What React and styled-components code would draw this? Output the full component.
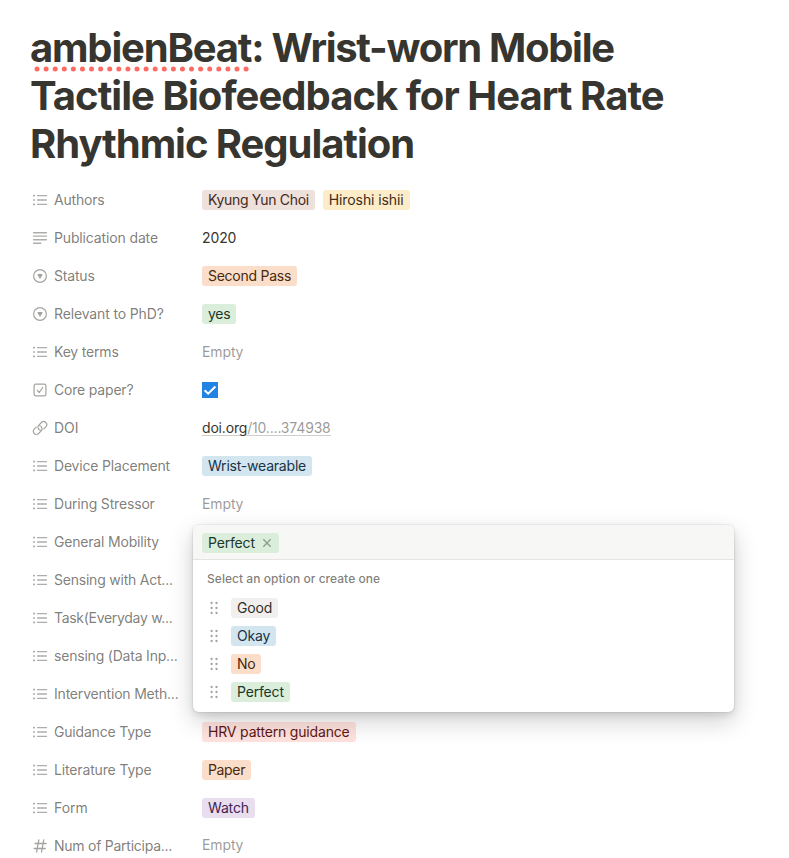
import React from "react";
import styled, { createGlobalStyle } from "styled-components";

const Global = createGlobalStyle`
  * { box-sizing: border-box; }
  html, body { margin: 0; padding: 0; background: #fff; }
  body { height: 858px; overflow: hidden; }
`;

const Page = styled.main`
  width: 789px;
  height: 858px;
  overflow: hidden;
  padding: 24px 24px 0 30px;
  background: #fff;
  color: #37352f;
  font-family: Inter, "Liberation Sans", sans-serif;
  font-size: 14px;
  line-height: 20px;
`;

const Title = styled.h1`
  margin: 0 0 15px;
  font-size: 40px;
  line-height: 48px;
  font-weight: 700;
`;

const TitleLine = styled.span`
  display: block;
  white-space: nowrap;
  letter-spacing: ${(p) => p.$track || 0}px;
`;

const Misspelled = styled.span`
  position: relative;
  letter-spacing: -1.18px;
`;

const Squiggle = styled.svg`
  position: absolute;
  left: 0;
  top: 42px;
`;

const Properties = styled.section`
  display: flex;
  flex-direction: column;
  gap: 4px;
`;

const PropertyRow = styled.div`
  display: flex;
  align-items: center;
  height: 34px;
  position: relative;
`;

const PropertyName = styled.div`
  display: flex;
  align-items: center;
  flex: none;
  width: 172px;
  padding-left: 2px;
  color: rgba(55, 53, 47, 0.65);
  white-space: nowrap;
  letter-spacing: ${(p) => p.$track ?? -0.19}px;

  svg {
    flex: none;
    margin-right: 6px;
  }
`;

const PropertyValue = styled.div`
  display: flex;
  align-items: center;
  gap: 8px;
  margin-top: ${(p) => p.$shift || 0}px;
`;

const Plain = styled.span`
  white-space: nowrap;
  color: ${(p) => (p.$muted ? "rgba(55, 53, 47, 0.5)" : "#37352f")};
  letter-spacing: -0.12px;
`;

const DoiLink = styled.span`
  height: 16px;
  line-height: 16px;
  border-bottom: 1px solid #cfcecc;
  letter-spacing: -0.18px;

  span { color: rgba(55, 53, 47, 0.5); }
`;

const palette = {
  gray: ["#f1f0ef", "#32302c"],
  brown: ["#eee0da", "#442a1e"],
  yellow: ["#fdecc8", "#402c1b"],
  orange: ["#fadec9", "#49290e"],
  green: ["#dbeddb", "#1c3829"],
  blue: ["#d3e5ef", "#183347"],
  red: ["#ffe2dd", "#5d1715"],
  purple: ["#e8deee", "#412454"],
};

const Tag = styled.span`
  display: inline-flex;
  align-items: center;
  height: 20px;
  padding: 0 6px;
  border-radius: 3px;
  white-space: nowrap;
  letter-spacing: ${(p) => p.$track ?? -0.17}px;
  background: ${(p) => palette[p.$color][0]};
  color: ${(p) => palette[p.$color][1]};

  svg { margin: 0 1px 0 7px; }
`;

const Checkbox = styled.span`
  display: flex;
  width: 16px;
  height: 16px;
  background: #2383e2;
`;

const Popup = styled.div`
  position: absolute;
  z-index: 2;
  left: 163px;
  top: 0;
  width: 541px;
  height: 187px;
  border-radius: 6px;
  overflow: hidden;
  background: #fff;
  box-shadow: 0 0 0 1px rgba(15, 15, 15, 0.05), 0 3px 6px rgba(15, 15, 15, 0.1),
    0 9px 24px rgba(15, 15, 15, 0.2);
`;

const PopupHeader = styled.div`
  display: flex;
  align-items: center;
  height: 35px;
  padding: 1px 9px 0;
  background: #f7f7f5;
  border-bottom: 1px solid #e4e4e2;
`;

const PopupHint = styled.div`
  padding: 9px 14px 0;
  font-size: 12px;
  font-weight: 500;
  color: rgba(55, 53, 47, 0.65);
  letter-spacing: 0.04px;
`;

const OptionList = styled.div`
  display: flex;
  flex-direction: column;
  padding-top: 5px;
`;

const Option = styled.div`
  display: flex;
  align-items: center;
  height: 28px;
  padding-left: 17px;

  svg { margin-right: 13px; }
`;

const stroke = "#a4a3a0";
const softStroke = "#aeadaa";

const ListIcon = () => (
  <svg width="16" height="16" viewBox="0 0 16 16" fill={softStroke}>
    {[2.9, 7.3, 11.7].map((y) => (
      <g key={y}>
        <rect x="1" y={y - 0.1} width="2" height="1.6" rx="0.3" />
        <rect x="5" y={y} width="10" height="1.4" rx="0.4" />
      </g>
    ))}
  </svg>
);

const TextIcon = () => (
  <svg width="16" height="16" viewBox="0 0 16 16" fill={softStroke}>
    <rect x="1" y="2" width="14" height="1.4" rx="0.4" />
    <rect x="1" y="5.4" width="14" height="1.4" rx="0.4" />
    <rect x="1" y="9" width="14" height="1.4" rx="0.4" />
    <rect x="1" y="12.5" width="8.4" height="1.4" rx="0.4" />
  </svg>
);

const SelectIcon = () => (
  <svg width="16" height="16" viewBox="0 0 16 16">
    <circle cx="8" cy="8" r="6.4" fill="none" stroke={stroke} strokeWidth="1.2" />
    <path d="M5.9 6.1h4.2c.4 0 .6.4.4.7L8.4 10.5c-.2.3-.6.3-.8 0L5.5 6.8c-.2-.3 0-.7.4-.7z" fill={stroke} />
  </svg>
);

const CheckIcon = () => (
  <svg width="16" height="16" viewBox="0 0 16 16" fill="none" stroke={stroke} strokeWidth="1.2">
    <rect x="2.1" y="2.1" width="11.8" height="11.8" rx="1.6" />
    <path d="M5.3 8.3l1.9 2.2 3.5-5" strokeLinecap="round" strokeLinejoin="round" />
  </svg>
);

const LinkIcon = () => (
  <svg width="16" height="16" viewBox="0 0 24 24" fill="none" stroke={stroke} strokeWidth="1.8" strokeLinecap="round" strokeLinejoin="round">
    <path d="M12.6 15.4a4.6 4.6 0 0 1-2.4-7.7l4-4a4.55 4.55 0 0 1 6.5 6.5l-3.1 3.1" />
    <path d="M11.4 8.6a4.6 4.6 0 0 1 2.4 7.7l-4 4a4.55 4.55 0 0 1-6.5-6.5l3.1-3.1" />
  </svg>
);

const HashIcon = () => (
  <svg width="16" height="16" viewBox="0 0 16 16" fill="none" stroke={stroke} strokeWidth="1.3" strokeLinecap="round">
    <path d="M6.8 2L4.6 14M11.7 2L9.5 14M3.1 5.5h11M2.2 10.5h11" />
  </svg>
);

const CloseIcon = () => (
  <svg width="10" height="10" viewBox="0 0 10 10" fill="none" stroke="#8ba08f" strokeWidth="1.4">
    <path d="M1.3 1.3l7.4 7.4M8.7 1.3L1.3 8.7" />
  </svg>
);

const GripIcon = () => (
  <svg width="8" height="14" viewBox="0 0 8 14" fill="#a3a29f">
    {[2, 7, 12].map((y) => (
      <React.Fragment key={y}>
        <circle cx="1.6" cy={y} r="1.15" />
        <circle cx="6.5" cy={y} r="1.15" />
      </React.Fragment>
    ))}
  </svg>
);

const options = [
  { text: "Good", color: "gray" },
  { text: "Okay", color: "blue", track: -0.22 },
  { text: "No", color: "orange", track: -0.3 },
  { text: "Perfect", color: "green" },
];

const OptionPicker = () => (
  <Popup>
    <PopupHeader>
      <Tag $color="green">
        Perfect
        <CloseIcon />
      </Tag>
    </PopupHeader>
    <PopupHint>Select an option or create one</PopupHint>
    <OptionList>
      {options.map((o) => (
        <Option key={o.text}>
          <GripIcon />
          <Tag $color={o.color} $track={o.track}>{o.text}</Tag>
        </Option>
      ))}
    </OptionList>
  </Popup>
);

const rows = [
  {
    name: "Authors",
    tags: [
      { text: "Kyung Yun Choi", color: "brown", track: -0.34 },
      { text: "Hiroshi ishii", color: "yellow", track: -0.1 },
    ],
  },
  { name: "Publication date", icon: TextIcon, plain: "2020", track: -0.14 },
  { name: "Status", icon: SelectIcon, tags: [{ text: "Second Pass", color: "orange", track: -0.26 }] },
  { name: "Relevant to PhD?", icon: SelectIcon, track: -0.14, tags: [{ text: "yes", color: "green", track: -0.3 }] },
  { name: "Key terms", empty: true },
  { name: "Core paper?", icon: CheckIcon, checked: true },
  { name: "DOI", icon: LinkIcon, link: ["doi.org", "/10....374938"], track: 0 },
  { name: "Device Placement", tags: [{ text: "Wrist-wearable", color: "blue", track: -0.21 }] },
  { name: "During Stressor", track: -0.17, empty: true },
  { name: "General Mobility", picker: true },
  { name: "Sensing with Act...", track: -0.22 },
  { name: "Task(Everyday w...", track: -0.3 },
  { name: "sensing (Data Inp...", track: -0.2 },
  { name: "Intervention Meth...", track: -0.2 },
  { name: "Guidance Type", tags: [{ text: "HRV pattern guidance", color: "red" }] },
  { name: "Literature Type", track: -0.15, tags: [{ text: "Paper", color: "orange", track: -0.35 }] },
  { name: "Form", track: 0, tags: [{ text: "Watch", color: "purple" }] },
  { name: "Num of Participa...", track: -0.25, icon: HashIcon, empty: true, shift: -2 },
];

const Property = ({ row }) => {
  const Icon = row.icon || ListIcon;
  return (
    <PropertyRow>
      <PropertyName $track={row.track}>
        <Icon />
        {row.name}
      </PropertyName>
      <PropertyValue $shift={row.shift}>
        {row.tags?.map((t) => (
          <Tag key={t.text} $color={t.color} $track={t.track}>{t.text}</Tag>
        ))}
        {row.plain && <Plain>{row.plain}</Plain>}
        {row.empty && <Plain $muted>Empty</Plain>}
        {row.link && (
          <DoiLink>
            {row.link[0]}
            <span>{row.link[1]}</span>
          </DoiLink>
        )}
        {row.checked && (
          <Checkbox>
            <svg width="16" height="16" viewBox="0 0 16 16" fill="none" stroke="#fff" strokeWidth="2">
              <path d="M2.6 8.2l3.6 3.5 7.2-7.2" />
            </svg>
          </Checkbox>
        )}
      </PropertyValue>
      {row.picker && <OptionPicker />}
    </PropertyRow>
  );
};

export default function App() {
  return (
    <Page>
      <Global />
      <Title>
        <TitleLine $track={-1.29}>
          <Misspelled>
            ambienBeat
            <Squiggle width="222" height="8" viewBox="0 0 222 8" fill="#ff6b62">
              {Array.from({ length: 24 }, (_, i) => (
                <circle key={i} cx={7 + i * 9.09} cy="4" r="2.5" />
              ))}
            </Squiggle>
          </Misspelled>
          : Wrist-worn Mobile
        </TitleLine>
        <TitleLine $track={-0.96}>Tactile Biofeedback for Heart Rate</TitleLine>
        <TitleLine $track={-1.05}>Rhythmic Regulation</TitleLine>
      </Title>
      <Properties>
        {rows.map((row) => (
          <Property key={row.name} row={row} />
        ))}
      </Properties>
    </Page>
  );
}
